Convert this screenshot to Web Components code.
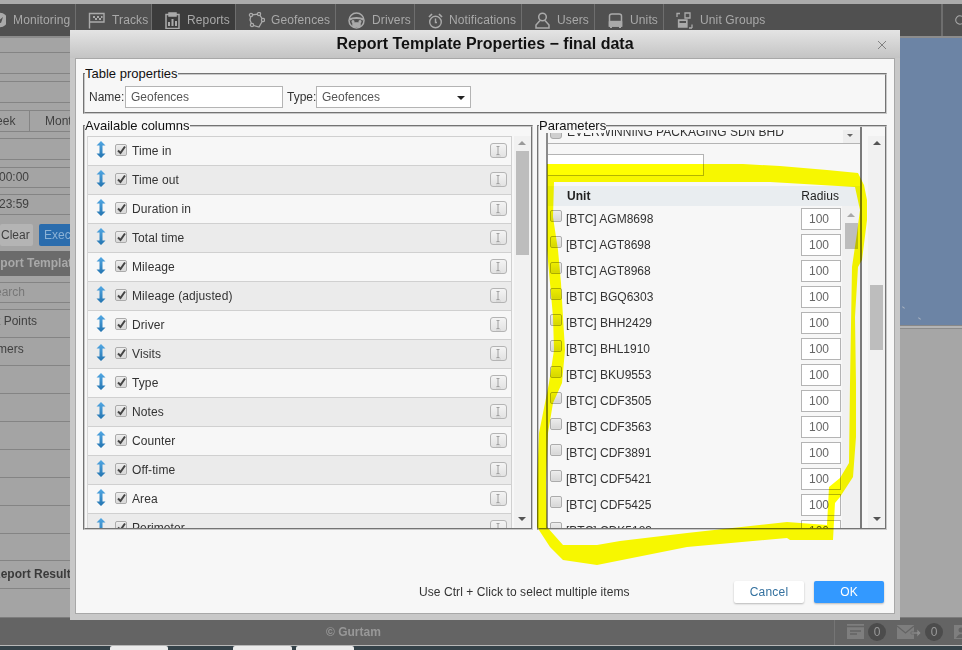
<!DOCTYPE html>
<html><head><meta charset="utf-8"><title>Report Template Properties</title>
<style>
html,body{margin:0;padding:0;background:#a6a6a6;overflow:hidden}
body{width:962px;height:650px;position:relative;font:12px/14px "Liberation Sans",Arial,sans-serif;color:#333}
wl-col-row svg,wl-tab svg{display:block}
</style></head><body>
<wl-shell>
  <wl-nav>
    <wl-tab w="76" pad="0" gap="7" off="-6" label="Monitoring"><svg width="12" height="16" viewBox="-6 -8 12 16" fill="none" stroke="#aaa" stroke-width="1.6"><circle cx="0" cy="0" r="6.5" fill="#aaa"/><path d="M-3 2 L3 -3 L1 3 Z" fill="#505050" stroke="none"/></svg></wl-tab>
    <wl-tab w="76" pad="12" gap="7" label="Tracks"><svg width="17" height="17" viewBox="0 0 17 17" fill="none" stroke="#aaa" stroke-width="1.4"><path d="M1.5 16.5V1.5H16V10H1.5"/><path d="M5 4h2v2H5zM9 4h2v2H9zM13 4h1.5v2H13zM7 6h2v2H7zM11 6h2v2h-2z" fill="#aaa" stroke="none"/></svg></wl-tab>
    <wl-tab w="84" pad="13" gap="7" active label="Reports"><svg width="15" height="17" viewBox="0 0 15 17" fill="none" stroke="#aaa" stroke-width="1.5"><path d="M4 2.5H1v14h13v-14h-3"/><path d="M4 1h7v3H4z" fill="#aaa"/><path d="M4 14V10M7.5 14V7M11 14v-5" stroke-width="2"/></svg></wl-tab>
    <wl-tab w="100" pad="12" gap="6" label="Geofences"><svg width="17" height="17" viewBox="0 0 17 17" fill="none" stroke="#aaa" stroke-width="1.3"><path d="M3 3L11 2L15 8L11 15L4 13L2 8Z"/><g fill="#505050"><circle cx="3" cy="3" r="1.6"/><circle cx="11" cy="2" r="1.6"/><circle cx="15" cy="8" r="1.6"/><circle cx="4" cy="13" r="1.6"/></g></svg></wl-tab>
    <wl-tab w="79" pad="12" gap="7" label="Drivers"><svg width="17" height="17" viewBox="0 0 17 17" fill="none" stroke="#aaa" stroke-width="1.5"><circle cx="8.5" cy="8.5" r="7.5"/><path d="M1.5 7.5C5 5.5 12 5.5 15.5 7.5" stroke-width="2.2"/><path d="M5 15V11H12V15" fill="#aaa"/><circle cx="5" cy="9.5" r=".8" fill="#aaa"/><circle cx="12" cy="9.5" r=".8" fill="#aaa"/></svg></wl-tab>
    <wl-tab w="107" pad="13" gap="6" label="Notifications"><svg width="15" height="17" viewBox="0 0 15 17" fill="none" stroke="#aaa" stroke-width="1.4"><circle cx="7.5" cy="10" r="5.8"/><path d="M7.5 6.5V10.5H9"/><path d="M1 5L4 2M14 5L11 2" stroke-width="1.7"/></svg></wl-tab>
    <wl-tab w="73" pad="13" gap="7" label="Users"><svg width="15" height="17" viewBox="0 0 15 17" fill="none" stroke="#aaa" stroke-width="1.5"><circle cx="7.5" cy="5" r="3.8"/><path d="M5 8.5L1 13v3h13v-3L10 8.5"/></svg></wl-tab>
    <wl-tab w="69" pad="13" gap="7" label="Units"><svg width="15" height="17" viewBox="0 0 15 17" fill="none" stroke="#aaa" stroke-width="1.5"><path d="M1.5 4Q1.5 2 4 2H11Q13.5 2 13.5 4V14H1.5Z"/><path d="M1.5 9.500H13.500" stroke-width="1.400"/><path d="M1.500 10H13.500V14H1.500Z" fill="#aaa"/><path d="M3 14v2M12 14v2" stroke-width="2"/></svg></wl-tab>
    <wl-tab w="278" pad="12" gap="7" label="Unit Groups"><svg width="17" height="17" viewBox="0 0 17 17" fill="none" stroke="#aaa" stroke-width="1.3"><path d="M1 5V1.500H4M16 16V12.500M16 16H13"/><path d="M9 1h5v5H9z" fill="none"/><path d="M2.500 8H11V15H2.500Z" fill="#aaa"/><path d="M3.500 9H10V11H3.500Z" fill="#505050" stroke="none"/></svg></wl-tab>
    <wl-tab w="20" pad="12" gap="0" label=""><svg width="10" height="14" viewBox="0 0 10 14" fill="none" stroke="#aaa" stroke-width="1.5"><circle cx="7" cy="7" r="6"/></svg></wl-tab>
  </wl-nav>
  <wl-main></wl-main>
  <wl-foot></wl-foot>
</wl-shell>

<wl-dialog heading="Report Template Properties − final data">
  <wl-group label="Table properties" h="41">
    <wl-props></wl-props>
  </wl-group>
  <wl-columns></wl-columns>
  <wl-actions></wl-actions>
</wl-dialog>

<wl-mark></wl-mark>

<script>
function def(name, css, html, init){
  customElements.define(name, class extends HTMLElement{
    constructor(){super();this.attachShadow({mode:'open'});}
    connectedCallback(){
      if(this._d)return;this._d=1;
      const h = typeof html==='function'?html(this):html;
      this.shadowRoot.innerHTML='<style>'+css+'</style>'+h;
      if(init)init(this,this.shadowRoot);
    }
  });
}

def('wl-shell',':host{display:flex;flex-direction:column;width:962px;height:650px;border-top:4px solid #ababab;box-sizing:border-box}','<slot></slot>');

def('wl-nav',`:host{display:flex;height:32px;background:#505050;border-bottom:2px solid #8c8c8c;box-shadow:0 1px 0 #9a9a9a;overflow:hidden;flex:none}`,'<slot></slot>');

def('wl-tab',`:host{display:flex;flex:none;box-sizing:border-box;align-items:center;height:32px;border-right:1px solid #6e6e6e;color:#a9a9a9;font-size:12px;letter-spacing:.13px}
:host([active]){background:#3c3c3c}
span{white-space:nowrap}`,
 e=>`<slot></slot><span>${e.getAttribute('label')}</span>`,
 (e,s)=>{e.style.width=e.getAttribute('w')+'px';
   e.style.paddingLeft=e.getAttribute('pad')+'px';
   e.style.gap=e.getAttribute('gap')+'px';
   if(e.hasAttribute('off'))e.style.marginLeft=e.getAttribute('off')+'px', e.style.width=(+e.getAttribute('w')+6)+'px';
   if(!e.getAttribute('label'))e.style.borderRight='none',e.style.borderLeft='1px solid #6e6e6e';
 });

def('wl-main',`:host{display:flex;flex:1;min-height:0;background:#a6a6a6}
.side{width:110px;overflow:hidden;flex:none;color:#404040;font-size:12px;white-space:nowrap;background:#a4a4a4}
.r{height:20px;line-height:20px;border-top:1px solid #848484;border-bottom:1px solid #848484}
.tabs{display:flex}
.tabs span{display:block;height:20px}
.tabs .w{width:29px;border-right:1px solid #848484;text-indent:-15px}
.tabs .m{padding-left:15px}
.btns{display:flex;gap:6px;height:22px;margin:9px 0 5px;}
.btns div{border-radius:2px;line-height:22px}
.clr{width:35px;background:#b4b4b4;text-indent:1px}
.exe{width:70px;background:#2a6cad;color:#8cb2d6;padding-left:5px}
.bar{height:25px;line-height:25px;background:#6b6b6b;color:#a9a9a9;font-weight:bold;text-indent:-15px;margin-bottom:6px}
.list div{height:27px;line-height:22px;border-bottom:1px solid #848484;text-indent:-3px}
.fill{flex:1}
.right{width:62px;flex:none;display:flex;flex-direction:column}
.map{height:287px;background:#6c84a5;position:relative}
.sp1,.sp2{position:absolute;width:3px;height:1px;background:#a8b2c0;transform:rotate(40deg)}
.sp1{left:2px;top:269px}.sp2{left:18px;top:280px}
.under{flex:1;border-top:1px solid #888;box-shadow:inset 0 2px 0 #b4b4b4,inset 0 3px 0 #8c8c8c}
`,`<div class="side">
<div style="height:14px"></div>
<div class="r"></div><div style="height:7px"></div>
<div class="r"></div><div style="height:7px"></div>
<div class="r tabs"><span class="w">Week</span><span class="m">Month</span></div><div style="height:6px"></div>
<div class="r" style="text-indent:-2px">l</div><div style="height:7px"></div>
<div class="r" style="height:19px;line-height:19px;text-indent:-1px">00:00</div><div style="height:6px"></div>
<div class="r" style="height:19px;line-height:19px;text-indent:-1px">23:59</div>
<div class="btns"><div class="clr">Clear</div><div class="exe">Execute</div></div>
<div class="bar">Report Templates</div>
<div class="r" style="height:19px;line-height:19px;color:#777;text-indent:-13px">Search</div><div style="height:6px"></div>
<div class="list" style="border-top:1px solid #848484">
<div>t Points</div><div>mers</div>
<div></div><div></div><div></div><div></div><div></div><div></div><div style="height:26px"></div></div>
<div style="height:27px;line-height:26px;font-weight:bold;color:#3a3a3a;text-indent:-8px;border-bottom:1px solid #848484">Report Results</div>
</div><div class="fill"></div><div class="right"><div class="map"><i class="sp1"></i><i class="sp2"></i></div><div class="under"></div></div>`);

def('wl-foot',`:host{display:block;flex:none}
.f{height:28px;background:#646464;border-top:1px solid #7c7c7c;display:flex;align-items:center;padding-left:326px;box-sizing:border-box;color:#989898;font-weight:bold;font-size:12px}
.b{width:18px;height:18px;flex:none;border-radius:50%;background:#4c4c4c;color:#9a9a9a;font-weight:normal;text-align:center;line-height:18px}
.tools{margin-left:auto;display:flex;align-items:center;height:27px;border-left:1px solid #757575;padding-left:12px;gap:4px;width:128px;box-sizing:border-box;flex:none}
.s{height:5px;background:#344249;border-top:1px solid #b8b8b8;display:flex;box-sizing:border-box}
.s i{display:block;height:4px;background:#ebebeb;border-radius:2px 2px 0 0;flex:none}
`,`<div class="f"><span>© Gurtam</span><div class="tools">
<svg style="flex:none" width="17" height="15" viewBox="0 0 17 15"><path d="M0 0H17V15H0Z" fill="#7e7e7e"/><path d="M0 2.500H17M3 7H14M3 10H10" stroke="#646464" stroke-width="1.500" fill="none"/></svg>
<div class="b">0</div>
<svg style="margin-left:7px;flex:none" width="24" height="14" viewBox="0 0 24 14" fill="none"><path d="M0 0H17V14H0Z" fill="#7e7e7e"/><path d="M0 1L8.500 8L17 1" stroke="#646464" stroke-width="1.300"/><path d="M14 7H20V4L24 8L20 12V9H14Z" fill="#8a8a8a" stroke="#646464" stroke-width=".7"/></svg>
<div class="b">0</div>
<svg style="margin-left:7px;flex:none" width="14" height="14" viewBox="0 0 14 14"><path d="M0 0H14V14H0Z" fill="#7e7e7e"/><circle cx="7" cy="5" r="2.500" fill="#646464"/><path d="M2 13Q7 5 12 13Z" fill="#646464"/></svg>
</div></div>
<div class="s"><i style="margin-left:110px;width:58px"></i><i style="margin-left:65px;width:59px"></i><i style="margin-left:4px;width:58px"></i></div>`);

def('wl-dialog',`:host{display:flex;flex-direction:column;position:absolute;left:70px;top:30px;width:830px;height:590px;background:#c8c8c8;box-sizing:border-box;padding:0 5px 6px 5px;color:#222}
header{flex:none;height:28px;margin:0 -5px;background:linear-gradient(#e4e4e4,#c4c4c4);position:relative;text-align:center;font:bold 16px/27px "Liberation Sans",Arial,sans-serif;color:#111}
.x{position:absolute;left:807px;top:10px}
main{flex:1;background:#f7f7f7;border:1px solid #a8a8a8;padding:14px 7px 0 7px;display:flex;flex-direction:column;min-height:0}
`,e=>`<header>${e.getAttribute('heading')}<svg class="x" width="10" height="10" viewBox="0 0 10 10" fill="none" stroke="#777" stroke-width=".9"><path d="M1 1L9 9M9 1L1 9"/></svg></header><main><slot></slot></main>`);

def('wl-group',`:host{display:block;border:2px groove #c8c8c8;box-sizing:border-box;flex:none}
.l{display:block;position:relative;width:fit-content;height:15px;line-height:15px;margin:-9px 0 -6px 0;padding-left:0;background:#f7f7f7;font-size:13px;color:#111;z-index:2;white-space:nowrap}
`,e=>`<div class="l">${e.getAttribute('label')}</div><slot></slot>`,
 e=>{e.style.height=e.getAttribute('h')+'px'});

def('wl-field',`:host{display:block;flex:none;box-sizing:border-box;height:22px;background:#fff;border:1px solid #b4b4b4;padding:0 5px;line-height:20px;color:#555;font-size:12px;position:relative}`,'<slot></slot>');

def('wl-props',`:host{display:flex;align-items:center;padding:11px 0 0 4px;font-size:12px;color:#333}
.n{width:36px;flex:none}
.t{margin-left:4px;width:29px;flex:none}
svg{position:absolute;right:5px;top:9px}
`,`<span class="n">Name:</span><wl-field style="width:158px">Geofences</wl-field><span class="t">Type:</span><wl-field style="width:155px"><span>Geofences</span><svg width="8" height="4" viewBox="0 0 8 4"><path d="M0 0H8L4 4Z" fill="#222"/></svg></wl-field>`);

def('wl-check',`:host{display:block;flex:none;width:12px;height:12px;box-sizing:border-box;border:1px solid #ababab;border-radius:2px;background:linear-gradient(#ececec,#d6d6d6);box-shadow:inset 0 0 1px #fff;position:relative}
svg{position:absolute;left:1px;top:0}`,
 e=>e.hasAttribute('on')?`<svg width="9" height="10" viewBox="0 0 9 10"><path d="M1 5.500L3.500 8L8 1.500" fill="none" stroke="#444" stroke-width="2"/></svg>`:'');

def('wl-scroll',`:host{display:block;flex:none;position:relative;box-sizing:border-box;background:#f1f1f1}
.t{display:block;position:absolute;background:#bdbdbd}
svg{position:absolute}`,
 e=>{const g=n=>e.getAttribute(n);
  return `<svg style="left:${g('ax')}px;top:${g('au')}px" width="8" height="4" viewBox="0 0 8 4"><path d="M4 0L8 4H0Z" fill="${g('uc')}"/></svg>
  <i class="t" style="left:${g('tx')}px;top:${g('ty')}px;width:${g('tw')}px;height:${g('th')}px"></i>
  ${g('ad')?`<svg style="left:${g('ax')}px;top:${g('ad')}px" width="8" height="4" viewBox="0 0 8 4"><path d="M0 0H8L4 4Z" fill="#555"/></svg>`:''}`});

def('wl-col-row',`:host{display:flex;align-items:center;box-sizing:border-box;height:29px;border-bottom:1px solid #d0d0d0;padding-left:8px;font-size:12px;letter-spacing:.1px;color:#333;background:#f7f7f7}
:host([alt]){background:#ebebeb}
.a{margin:-4px 0 0 0;flex:none}
wl-check{margin:-3px 5px 0 9px}
span{flex:1;white-space:nowrap}
.i{flex:none;width:17px;height:15px;box-sizing:border-box;margin-right:4px;margin-top:-1px;border:1px solid #b4b4b4;border-radius:3px;background:linear-gradient(#f4f4f4,#e2e2e2)}
`,e=>`<svg class="a" width="10" height="17" viewBox="0 0 10 17"><defs><linearGradient id="g" x1="0" y1="0" x2="0" y2="1"><stop offset="0" stop-color="#52a8e4"/><stop offset="1" stop-color="#2374b0"/></linearGradient></defs><path d="M5 0L9.500 4.500H6.500V12.500H9.500L5 17L.5 12.500H3.500V4.500H.5Z" fill="url(#g)"/></svg><wl-check on></wl-check><span>${e.getAttribute('label')}</span>
<svg class="i" viewBox="0 0 15 13"><path d="M5.500 2.500H8.500M7 2.500V10.500M5.500 10.500H8.500" stroke="#a0a0a0" fill="none"/><path d="M5 12H10" stroke="#cfcfcf" fill="none"/></svg>`);

def('wl-unit-row',`:host{display:flex;align-items:center;height:26px;box-sizing:border-box;font-size:12px;color:#333;padding:0 1px 0 2px;flex:none}
wl-check{margin:-6px 4px 0 0}
span{flex:1;white-space:nowrap}
wl-field{width:40px;padding-left:7px;color:#666;line-height:20px}
`,e=>`<wl-check></wl-check><span>${e.getAttribute('label')}</span><wl-field>100</wl-field>`);

const cols=['Time in','Time out','Duration in','Total time','Mileage','Mileage (adjusted)','Driver','Visits','Type','Notes','Counter','Off-time','Area','Perimeter'];
const units=['AGM8698','AGT8698','AGT8968','BGQ6303','BHH2429','BHL1910','BKU9553','CDF3505','CDF3563','CDF3891','CDF5421','CDF5425','CDK5183'];

def('wl-columns',`:host{display:flex;gap:4px;margin-top:11px;flex:none;width:804px}
.g1{width:450px}.g2{width:350px}
.in{display:flex;height:401px;overflow:hidden}
.rows{margin:9px 0 0 2px;width:425px;border-left:1px solid #d8d8d8;border-top:1px solid #d0d0d0;box-sizing:border-box;border-right:1px solid #d0d0d0;height:392px;overflow:hidden}
.left-s{margin:9px 0 0 2px;width:17px;height:392px}
.p{display:flex;height:401px;padding-left:7px}
.pc{width:316px;flex:none;box-sizing:border-box;border-left:2px solid #8a8a8a;border-right:2px solid #7a7a7a;display:flex;flex-direction:column;background:#f7f7f7;height:401px;overflow:hidden}
.sel{flex:none;margin-top:3px;height:14px;overflow:hidden;border-bottom:1px solid #b4b4b4;box-sizing:border-box;display:flex;position:relative;white-space:nowrap;font-size:12px;color:#333}
.sel .c{width:10px;height:10px;margin:-3px 0 0 2px;flex:none;border-radius:3px;background:#cfcfcf;border:1px solid #aaa;box-sizing:content-box}
.sel span{margin:-5px 0 0 5px}
.sel b{position:absolute;right:0;top:0;width:17px;height:13px;background:#eeeeee}
.sel svg{position:absolute;right:7px;top:4px}
.hd{flex:none;height:20px;margin-top:10px;background:#e9edf0;display:flex;align-items:center;justify-content:space-between;font-size:12px;padding:0 21px 0 19px;color:#222;letter-spacing:.05px}
.hd b{color:#222}
.body{flex:1;display:flex;min-height:0}
.ur{width:294px;display:flex;flex-direction:column;overflow:hidden;height:322px;flex:none}
.pad{width:6px;flex:none}
.big{width:17px;height:392px;margin-top:9px;flex:none}
`,()=>`<wl-group class="g1" label="Available columns" h="405"><div class="in"><div class="rows">${cols.map((c,i)=>`<wl-col-row label="${c}"${i%2?' alt':''}></wl-col-row>`).join('')}</div><wl-scroll class="left-s" ax="4" au="5" ad="381" uc="#9a9a9a" tx="2" ty="15" tw="13" th="104"></wl-scroll></div></wl-group>
<wl-group class="g2" label="Parameters" h="405"><div class="p"><div class="pc">
<div class="sel"><i class="c"></i><span>EVERWINNING PACKAGING SDN BHD</span><b></b><svg width="6" height="3" viewBox="0 0 6 3"><path d="M0 0H6L3 3Z" fill="#666"/></svg></div>
<wl-field style="width:157px;margin:10px 0 0 -1px"></wl-field>
<div class="hd"><b>Unit</b><span>Radius</span></div>
<div class="body"><div class="ur">${units.map(u=>`<wl-unit-row label="[BTC] ${u}"></wl-unit-row>`).join('')}</div>
<wl-scroll style="width:18px;height:322px" ax="5" au="7" uc="#a8a8a8" tx="3" ty="17" tw="13" th="26"></wl-scroll></div>
</div><div class="pad"></div><wl-scroll class="big" ax="5" au="5" ad="381" uc="#555" tx="2" ty="149" tw="13" th="65"></wl-scroll></div></wl-group>`);

def('wl-actions',`:host{display:flex;align-items:center;margin-top:51px;height:22px;font-size:12px;color:#333}
.m{margin-left:336px;width:315px;letter-spacing:.07px;flex:none}
button{font:12px "Liberation Sans",Arial,sans-serif;letter-spacing:.2px;width:70px;height:22px;border:0;border-radius:2px;box-shadow:0 1px 2px rgba(0,0,0,.25);padding:0;flex:none}
.c{background:#fff;color:#34719f}
.o{background:#3399ff;color:#fff;margin-left:10px}
`,`<span class="m">Use Ctrl + Click to select multiple items</span><button class="c">Cancel</button><button class="o">OK</button>`);

def('wl-mark',`:host{display:block;position:absolute;left:0;top:0;width:962px;height:650px;pointer-events:none;mix-blend-mode:multiply}
svg{display:block}`,`<svg width="962" height="650" viewBox="0 0 962 650"><path fill="#ffff00" fill-rule="evenodd" d="M547 164L680 164L743 164L780 166L827 170L858 173L864 185L867 200L867 220L862 260L858 267L855 317L856 383L856 437L853 477L840 497L835 503L833 540L790 540L787 538L687 547L637 557L597 565L563 560L550 547L537 527L537 483L539 433L545 403L549 383L554 350L553 317L550 283L547 250L547 217L547 182Z M554 182L770 182L855 187L860 210L857 233L852 267L850 383L849 463L840 478L829 487L827 525L787 522L687 533L620 541L597 545L563 545L547 527L546 483L548 433L553 403L562 383L565 350L563 317L561 283L558 250L553 217Z"/></svg>`);
</script>
</body></html>
